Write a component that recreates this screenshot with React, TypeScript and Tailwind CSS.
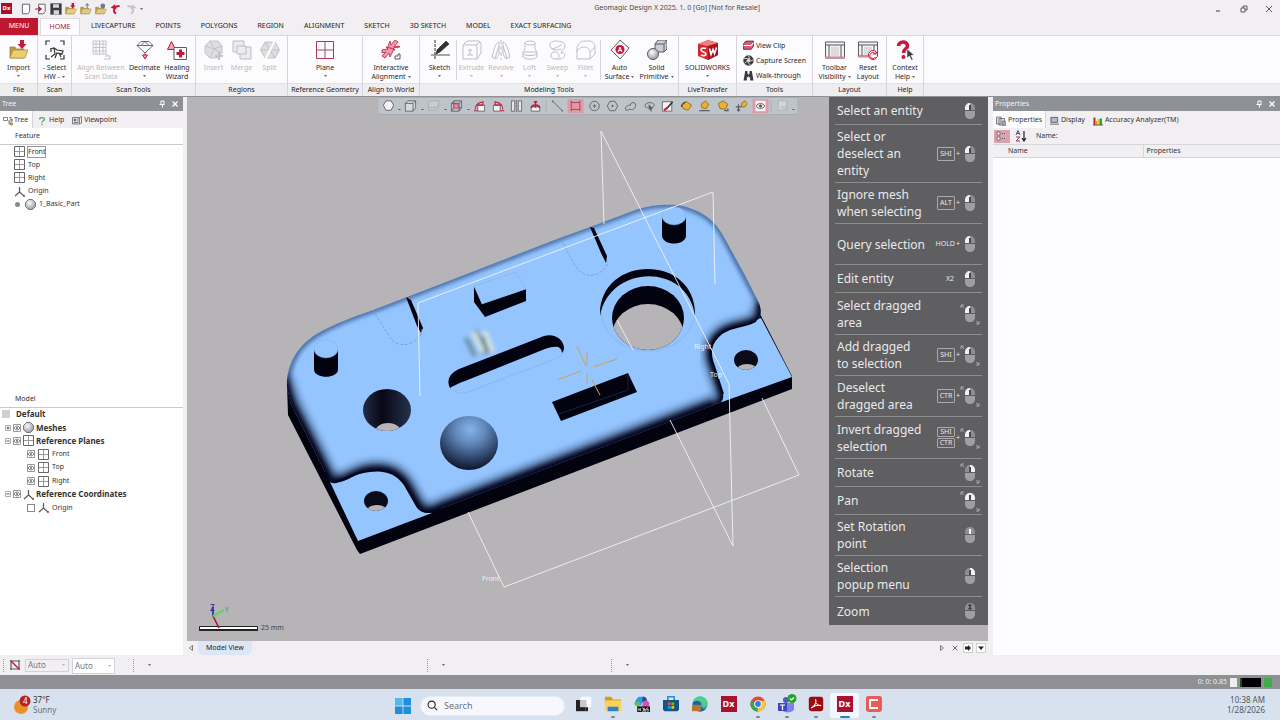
import type { ReactNode } from 'react'

const RED = '#c8173c'
const INK = '#5b5b60'

function Svg({ box = '0 0 20 20', className = 'h-5 w-5', children }: { box?: string; className?: string; children: ReactNode }) {
  return (
    <svg viewBox={box} className={`shrink-0 ${className}`} fill="none" stroke={INK} strokeWidth="1" aria-hidden="true">
      {children}
    </svg>
  )
}

/* ---------- ribbon icons ---------- */

const FolderShape = ({ color = '#e8cf70' }: { color?: string }) => (
  <>
    <path d="M1 18V7h5l1 2h8v9z" fill="#b89a45" stroke="#8f7632" strokeWidth=".7" />
    <path d="M1 18l3-8h15l-3 8z" fill={color} stroke="#a58b3c" strokeWidth=".7" />
  </>
)

const ribbonIcons: Record<string, ReactNode> = {
  import: (
    <>
      <FolderShape />
      <path d="M11 0h4v4h2.500L13 9 8.500 4H11z" fill={RED} stroke="none" />
    </>
  ),
  select: (
    <>
      <path d="M1 5V1h4M15 1h4v4M19 15v4h-4M5 19H1v-4" strokeWidth="1.200" stroke="#333" />
      <path d="M5 9l4-1 3 2 6 1-1 3-5-1-2 5M9 8l1 6-4 3M14 13l2 4M6 9v3" strokeWidth="1.200" stroke="#333" />
    </>
  ),
  alignScan: (
    <g stroke="#c4c4c8">
      <path d="M2 1h13v13H2zM5 1v13M8.500 1v13M12 1v13M2 4h13M2 7.500h13M2 11h13" />
      <path d="M14 16h5v3h-6M16 14v2" strokeWidth="1.200" />
    </g>
  ),
  decimate: (
    <>
      <path d="M6 1.500h8l4 4-8 7.500-8-7.500zM2 5.500h16M6 5.500l4-4 4 4" strokeWidth=".9" />
      <path d="M10 13v2" />
      <path d="M7.500 15h5L10 19z" fill="#f0a5b5" stroke={RED} />
    </>
  ),
  healing: (
    <>
      <path d="M4.500 1.500l4 8h-8z" fill="#f0a5b5" stroke={RED} />
      <path d="M7 7.500h12.500v12H7z" fill="#fff" />
      <path d="M12 9.500h3v2.500h2.500v3H15v2.500h-3V15H9.500v-3H12z" fill={RED} stroke="none" />
    </>
  ),
  insert: (
    <g stroke="#c4c4c8" fill="#dededf">
      <path d="M6 1h8l4 5v7l-5 5H6l-5-5V6z" />
      <path d="M6 1l4 8 8-3M1 6l9 3-4 9M10 9l8 4" />
      <path d="M15 12v8M11 16h8" strokeWidth="2" />
    </g>
  ),
  merge: (
    <g stroke="#bdbdc1" fill="#ececee">
      <path d="M1 1h11v11H1z" />
      <path d="M8 7h11v12H8z" />
      <path d="M5 6h9v8H5z" />
    </g>
  ),
  split: (
    <g stroke="#c4c4c8" fill="#dededf">
      <path d="M5 2h10l4.500 8-4.500 8H5L.5 10zM.5 10h19M5 2l10 16" />
      <path d="M15 0L5 20" stroke="#fff" strokeWidth="2" />
    </g>
  ),
  plane: (
    <>
      <path d="M1.500 1.500h17v17h-17z" stroke="#b3324d" />
      <path d="M10 1v18M1 10h18" stroke="#8c5260" />
    </>
  ),
  interactive: (
    <>
      <path d="M18 6l-5 1 4-5-3-2-4 5-1-4-3 8 8 1-2-2 7-1z" fill="#ef9aab" stroke={RED} strokeWidth=".8" />
      <path d="M1 10l6-1-2-2 8 2-4 8-1-4-4 5-3-2 4-4-4 1z" fill="#ef9aab" stroke={RED} strokeWidth=".8" />
      <path d="M14 19v-3h3v-2h2v5z" />
    </>
  ),
  sketch: (
    <>
      <path d="M5 0v20" stroke="#333" strokeDasharray="3 1" />
      <path d="M1 15h19" stroke="#555" />
      <path d="M16 1l3 3-9 8-4 2 1-4z" fill="#333" stroke="#222" strokeWidth=".6" />
    </>
  ),
  extrude: (
    <g stroke="#bfbfc3">
      <path d="M1 5l4-4h12l2 2v10l-4 6H1zM1 5h13l1 2v12M14 5l4-3" />
      <path d="M8 15V9M6 11l2-2 2 2M5 15h6" />
    </g>
  ),
  revolve: (
    <g stroke="#bfbfc3">
      <path d="M10 0v20" strokeDasharray="4 2" />
      <path d="M8 2C4 3 3 10 1 17l4 2 3-5zM12 2c4 1 5 8 7 15l-4 2-3-5zM8 6L4 18M12 6l4 12" />
    </g>
  ),
  loft: (
    <g stroke="#bfbfc3">
      <ellipse cx="10" cy="3" rx="5" ry="2" />
      <path d="M5 3c0 5 0 7-2 9h14c-2-2-2-4-2-9M3 12v5c3 3 11 3 14 0v-5M3 14c3 2 11 2 14 0" />
    </g>
  ),
  sweep: (
    <g stroke="#bfbfc3">
      <path d="M3 8C0 4 3 1 8 1c6 0 9 2 9 5s-4 4-4 7c5-1 5 6-1 6H7c-6 0-5-8 0-7" />
      <path d="M3 8c3 2 7-2 11-3M3 8c3 3 7 2 10 1M9 19c3-1 3-6-2-7" />
    </g>
  ),
  fillet: (
    <g stroke="#bfbfc3">
      <path d="M1 7c2-4 4-6 8-6h5c4 1 5 3 5 7v6l-5 5V13c0-4-3-6-6-6S1 9 1 12zM1 12v7h13M14 12l5-5" />
    </g>
  ),
  autoSurface: (
    <>
      <path d="M10 0c3 3 6 5 9 8-3 4-6 8-9 11C7 16 4 13 1 10c3-3 6-6 9-10z" fill="#f4f4f5" />
      <circle cx="10" cy="9.500" r="4.500" fill={RED} stroke="none" />
      <path d="M8 12l2-5 2 5M8.800 10.500h2.400" stroke="#fff" />
    </>
  ),
  solid: (
    <>
      <path d="M8 4l3-4h9v9l-3 3H8z" fill="#c9cdd6" />
      <path d="M8 4h9v8M17 4l3-4" />
      <circle cx="6" cy="14" r="5.500" fill="url(#ballGrad)" />
    </>
  ),
  solidworks: (
    <>
      <path d="M0 4l10-4 10 3v12l-10 5-10-4z" fill="#d9242b" stroke="none" />
      <path d="M0 4l10-4 10 3-10 3z" fill="#f08080" stroke="none" />
      <path d="M10 6l10-3v12l-10 5z" fill="#a8131c" stroke="none" />
      <path d="M8 8.500c-3-1-5-.500-5 1.500s5 2 5 4-3 2-5 1M11.500 8.500l1.500 6 2-5 1.500 4 2-6" stroke="#fff" strokeWidth="1.600" />
    </>
  ),
  toolbarVis: (
    <>
      <path d="M.5 2h19v16H.5z" fill="#f2f2f3" />
      <path d="M.5 5h19M4 5v13M16 5v13" />
      <path d="M6 7h8v9H6z" fill="#dcdcde" stroke="none" />
      <path d="M0 17.500h20" stroke="#d98797" strokeWidth="2" />
    </>
  ),
  reset: (
    <>
      <path d="M.5 2h19v14H.5z" fill="#f2f2f3" />
      <path d="M.5 5h19M4 5v11M16 5v11" />
      <path d="M6 7h8v8H6z" fill="#dcdcde" stroke="none" />
      <path d="M0 16.500h12" stroke="#d98797" strokeWidth="2" />
      <circle cx="15" cy="15" r="4.500" fill="#fff" stroke={RED} />
      <path d="M17.500 14a3 3 0 1 0 0 3M15 14h3v-2" stroke={RED} />
    </>
  ),
  help: (
    <>
      <path d="M3.500 6c0-5 9-5.500 9 0 0 3-4 3-4 7" stroke={RED} strokeWidth="3.600" />
      <circle cx="8.500" cy="17" r="2" fill={RED} stroke="none" />
      <path d="M12 9l7 6-3 .5 2 4-1.500 1-2-4.500-2.500 2z" fill="#3b3b40" stroke="#fff" strokeWidth=".5" />
    </>
  ),
}

type Tool = { id: string; lines: string[]; width: string; arrow?: 'below' | 'inline'; disabled?: boolean; split?: boolean }

const groups: { label: string; width: string; tools: Tool[] }[] = [
  { label: 'File', width: 'w-[38px]', tools: [{ id: 'import', lines: ['Import'], width: 'w-[36px]', arrow: 'below' }] },
  { label: 'Scan', width: 'w-[34px]', tools: [{ id: 'select', lines: ['- Select', 'HW -'], width: 'w-[32px]', arrow: 'inline' }] },
  {
    label: 'Scan Tools',
    width: 'w-[124px]',
    tools: [
      { id: 'alignScan', lines: ['Align Between', 'Scan Data'], width: 'w-[54px]', disabled: true },
      { id: 'decimate', lines: ['Decimate'], width: 'w-[33px]', arrow: 'below' },
      { id: 'healing', lines: ['Healing', 'Wizard'], width: 'w-[32px]' },
    ],
  },
  {
    label: 'Regions',
    width: 'w-[92px]',
    tools: [
      { id: 'insert', lines: ['Insert'], width: 'w-[28px]', disabled: true },
      { id: 'merge', lines: ['Merge'], width: 'w-[28px]', disabled: true },
      { id: 'split', lines: ['Split'], width: 'w-[28px]', disabled: true },
    ],
  },
  { label: 'Reference Geometry', width: 'w-[75px]', tools: [{ id: 'plane', lines: ['Plane'], width: 'w-[40px]', arrow: 'below' }] },
  { label: 'Align to World', width: 'w-[57px]', tools: [{ id: 'interactive', lines: ['Interactive', 'Alignment'], width: 'w-[50px]', arrow: 'inline' }] },
  {
    label: 'Modeling Tools',
    width: 'w-[259px]',
    tools: [
      { id: 'sketch', lines: ['Sketch'], width: 'w-[32px]', arrow: 'below' },
      { id: 'extrude', lines: ['Extrude'], width: 'w-[30px]', arrow: 'below', disabled: true, split: true },
      { id: 'revolve', lines: ['Revolve'], width: 'w-[29px]', arrow: 'below', disabled: true },
      { id: 'loft', lines: ['Loft'], width: 'w-[28px]', arrow: 'below', disabled: true },
      { id: 'sweep', lines: ['Sweep'], width: 'w-[28px]', arrow: 'below', disabled: true },
      { id: 'fillet', lines: ['Fillet'], width: 'w-[28px]', arrow: 'below', disabled: true },
      { id: 'autoSurface', lines: ['Auto', 'Surface'], width: 'w-[38px]', arrow: 'inline', split: true },
      { id: 'solid', lines: ['Solid', 'Primitive'], width: 'w-[36px]', arrow: 'inline' },
    ],
  },
  { label: 'LiveTransfer', width: 'w-[58px]', tools: [{ id: 'solidworks', lines: ['SOLIDWORKS'], width: 'w-[54px]', arrow: 'below' }] },
  { label: 'Tools', width: 'w-[76px]', tools: [] },
  {
    label: 'Layout',
    width: 'w-[74px]',
    tools: [
      { id: 'toolbarVis', lines: ['Toolbar', 'Visibility'], width: 'w-[37px]', arrow: 'inline' },
      { id: 'reset', lines: ['Reset', 'Layout'], width: 'w-[30px]' },
    ],
  },
  { label: 'Help', width: 'w-[37px]', tools: [{ id: 'help', lines: ['Context', 'Help'], width: 'w-[34px]', arrow: 'inline' }] },
]

const Caret = ({ faded }: { faded?: boolean }) => (
  <svg viewBox="0 0 3 2" className="h-[2px] w-[3px] shrink-0" aria-hidden="true">
    <path d="M0 0h3L1.500 2z" fill={faded ? '#b5b5b9' : '#66666b'} />
  </svg>
)

function RibbonTool({ tool }: { tool: Tool }) {
  return (
    <>
      {tool.split && <span className="mt-1 h-10 w-px shrink-0 bg-[#d6d6da]" />}
      <button
        disabled={tool.disabled}
        className={`${tool.width} flex shrink-0 flex-col items-center pt-1 leading-[9px] whitespace-nowrap ${tool.disabled ? 'text-[#b9b9bd]' : 'text-[#2b2b2e]'}`}
      >
        <Svg>{ribbonIcons[tool.id]}</Svg>
        <span className="mt-[3px]">{tool.lines[0]}</span>
        {tool.lines[1] && (
          <span className="flex items-center gap-[2px]">
            {tool.lines[1]}
            {tool.arrow === 'inline' && <Caret />}
          </span>
        )}
        {tool.arrow === 'below' && (
          <span className="mt-[3px] block">
            <Caret faded={tool.disabled} />
          </span>
        )}
      </button>
    </>
  )
}

function QuickTools() {
  return (
    <div className="flex flex-col items-start pt-[2px] leading-[15px] text-[#2b2b2e]">
      <button className="flex items-center gap-[2px] whitespace-nowrap">
        <Svg className="h-[11px] w-[11px]">
          <path d="M1 7l4-5h14v9l-4 6H1z" fill="#d65b75" stroke="#333" strokeWidth="1.500" />
          <path d="M1 10h14l4-5" stroke="#fff" strokeWidth="2" />
        </Svg>
        View Clip
      </button>
      <button className="flex items-center gap-[2px] whitespace-nowrap">
        <Svg className="h-[11px] w-[11px]">
          <circle cx="10" cy="10" r="9" fill="#3b3b3f" />
          <circle cx="10" cy="10" r="3" fill="#eee" />
          <path d="M10 1l3 8M19 9l-8 3M13 18l-5-6M3 15l6-6M2 6l9 1" stroke="#eee" strokeWidth="1.500" />
        </Svg>
        Capture Screen
      </button>
      <button className="flex items-center gap-[2px] whitespace-nowrap">
        <Svg className="h-[11px] w-[11px]">
          <path d="M4 2h4v5h4V2h4l3 17h-6v-6H7v6H1z" fill="#3b3b3f" stroke="none" />
          <path d="M10 1v18" stroke="#fff" strokeDasharray="3 2" />
        </Svg>
        Walk-through
      </button>
    </div>
  )
}

function TitleBar() {
  return (
    <header className="grid h-[17px] grid-cols-[8fr_auto_7fr] items-center bg-[#f1eff2]">
      <div className="flex items-center">
        <span className="ml-[1px] mr-2 flex h-[11px] w-[11px] items-center justify-center bg-[#a80f2c] text-[6px] font-bold text-white">Dx</span>
        <div className="flex items-center gap-[3px]">
          <button aria-label="New">
            <Svg className="h-3 w-3"><path d="M4 2h12v12l-3 4H4z" fill="#fff" strokeWidth="1.500" /></Svg>
          </button>
          <button aria-label="Open">
            <Svg className="h-3 w-3">
              <path d="M6 2h11v12l-3 4H6z" fill="#fff" strokeWidth="1.500" />
              <path d="M0 9h6V5l6 5-6 5v-4H0z" fill={RED} stroke="none" />
            </Svg>
          </button>
          <button aria-label="Save">
            <Svg className="h-3 w-3">
              <path d="M1 1h18v18H1z" fill="#3a3a3f" />
              <path d="M5 2h10v6H5zM6 12h9v7H6z" fill="#d5d5d8" stroke="none" />
            </Svg>
          </button>
          <button aria-label="Import file">
            <Svg className="h-3 w-3">{ribbonIcons.import}</Svg>
          </button>
          <button aria-label="Export file">
            <Svg className="h-3 w-3">
              <FolderShape color="#dccb85" />
              <path d="M11 9V4H8l4-4 4 4h-3v5z" fill="#8a8a8e" stroke="none" />
            </Svg>
          </button>
          <button aria-label="Open recent">
            <Svg className="h-3 w-3">
              <FolderShape color="#dccb85" />
              <circle cx="13" cy="5" r="4" fill="#77777c" stroke="none" />
            </Svg>
          </button>
          <button aria-label="Undo">
            <Svg className="h-3 w-3"><path d="M10 18C3 13 7 5 16 5" stroke={RED} strokeWidth="3" /><path d="M1 8l7-6 3 9z" fill={RED} stroke="none" /></Svg>
          </button>
          <button aria-label="Redo">
            <Svg className="h-3 w-3"><path d="M10 18C17 13 13 5 4 5" stroke="#c6c6ca" strokeWidth="3" /><path d="M19 8l-7-6-3 9z" fill="#c6c6ca" stroke="none" /></Svg>
          </button>
          <Caret />
        </div>
      </div>
      <h1 className="text-[#4b4b50]">Geomagic Design X 2025. 1. 0 [Go] [Not for Resale]</h1>
      <div className="flex justify-end gap-[17px] pr-[7px] text-[#333]">
        <button aria-label="Minimize"><Svg box="0 0 8 8" className="h-2 w-2"><path d="M1 6h4" strokeWidth="1.200" /></Svg></button>
        <button aria-label="Restore"><Svg box="0 0 8 8" className="h-2 w-2"><path d="M1 3h4v4H1zM3 3V1h4v4H5" /></Svg></button>
        <button aria-label="Close"><Svg box="0 0 8 8" className="h-2 w-2"><path d="M1 1l6 6M7 1L1 7" /></Svg></button>
      </div>
    </header>
  )
}

const ribbonTabs = ['LIVECAPTURE', 'POINTS', 'POLYGONS', 'REGION', 'ALIGNMENT', 'SKETCH', '3D SKETCH', 'MODEL', 'EXACT SURFACING']

function Ribbon() {
  return (
    <div className="bg-[#f1eff2] text-[#222226]">
      <nav className="flex h-[18px] items-end">
        <button className="mr-[2px] h-[17px] w-[38px] bg-[#bd1731] text-white">MENU</button>
        <button className="mr-[1px] h-[17px] w-[40px] border border-b-0 border-[#dcdce0] bg-[#fcfbfd] text-[#a8263f]">HOME</button>
        {ribbonTabs.map((tab) => (
          <button key={tab} className="h-[17px] px-[10px] whitespace-nowrap">{tab}</button>
        ))}
      </nav>
      <div className="flex h-[61px] border-t border-[#dcdce0] bg-[#fcfbfd]">
        {groups.map((group) => (
          <section key={group.label} className={`${group.width} flex shrink-0 flex-col border-r border-[#d6d6da]`}>
            <div className="flex h-[47px] justify-center">
              {group.tools.length ? group.tools.map((tool) => <RibbonTool key={tool.id} tool={tool} />) : <QuickTools />}
            </div>
            <h2 className="flex h-[13px] items-center justify-center border-t border-[#e2e2e6] bg-[#eeedf0] leading-[10px] whitespace-nowrap">{group.label}</h2>
          </section>
        ))}
        <div className="flex flex-1 flex-col justify-end">
          <div className="h-[13px] border-t border-[#e2e2e6] bg-[#eeedf0]" />
        </div>
      </div>
    </div>
  )
}

/* ---------- dock panels ---------- */

function DockHeader({ title }: { title: string }) {
  return (
    <div className="flex h-[14px] items-center justify-between bg-[#8f9196] pl-[2px] pr-1 text-[#f3f3f4]">
      <h2>{title}</h2>
      <div className="flex gap-[5px]">
        <button aria-label={`Pin ${title}`}><Svg box="0 0 8 8" className="h-2 w-2"><path d="M3 1h3v3.500H3zM1.500 4.500h5M4.500 5v2.500" stroke="#fff" /></Svg></button>
        <button aria-label={`Close ${title}`}><Svg box="0 0 8 8" className="h-2 w-2"><path d="M1.500 1.500l5 5M6.500 1.500l-5 5" stroke="#fff" strokeWidth="1.300" /></Svg></button>
      </div>
    </div>
  )
}

const PlaneIcon = () => (
  <Svg box="0 0 11 11" className="h-[11px] w-[11px]"><path d="M.5.5h10v10H.5z" stroke="#66666b" /><path d="M5.500 1v9M1 5.500h9" stroke="#9a9a9e" /></Svg>
)
const AxesIcon = () => (
  <Svg box="0 0 11 11" className="h-[11px] w-[11px]"><path d="M5.500 1v5" stroke="#4d6b4a" strokeWidth="1.300" /><path d="M5.500 6L1 10M5.500 6L10 10" strokeWidth="1.200" /><circle cx="10" cy="10" r="1" fill="#b33" stroke="none" /></Svg>
)
const MeshIcon = () => (
  <Svg box="0 0 11 11" className="h-[11px] w-[11px]"><path d="M3.500.5h4l3 3v4l-3 3h-4l-3-3v-4z" fill="url(#ballGrad)" stroke="#77777c" /></Svg>
)
const EyeIcon = () => (
  <Svg box="0 0 8 8" className="h-2 w-2"><path d="M.5.5h7v7h-7z" stroke="#99999d" /><path d="M1 4c1.500-2.500 4.500-2.500 6 0-1.500 2.500-4.500 2.500-6 0z" strokeWidth=".8" /><circle cx="4" cy="4" r=".9" fill={INK} stroke="none" /></Svg>
)
const Expander = ({ open }: { open: boolean }) => (
  <button aria-label={open ? 'Collapse' : 'Expand'}>
    <Svg box="0 0 6 6" className="h-[6px] w-[6px]"><path d="M.5.5h5v5h-5z" stroke="#99999d" strokeWidth=".8" /><path d={open ? 'M1.500 3h3' : 'M1.500 3h3M3 1.500v3'} /></Svg>
  </button>
)

function TreePanel() {
  return (
    <aside className="flex w-[183px] shrink-0 flex-col bg-white text-[#333337]">
      <DockHeader title="Tree" />
      <div className="flex h-[17px] items-stretch bg-[#f1eff2]">
        <button className="flex w-[33px] items-center gap-[1px] border-r border-[#d6d6da] bg-white pt-[2px] pl-[3px]">
          <Svg className="h-[10px] w-[10px]"><path d="M1 3h8v6H1zM12 3h4v5h3M12 8v8M12 12h7M12 16h7" strokeWidth="1.500" /><path d="M15 6h4v3h-4zM15 14h4v4h-4z" fill="#cfae3c" stroke="#84702a" /></Svg>
          Tree
        </button>
        <button className="flex items-center gap-[3px] pt-[2px] pl-[5px]">
          <Svg className="h-[10px] w-2"><path d="M4 6c0-6 12-6 12 0 0 4-6 3-6 8" stroke="#5a9b6a" strokeWidth="3" /><circle cx="10" cy="18" r="2" fill="#5a9b6a" stroke="none" /></Svg>
          Help
        </button>
        <button className="flex items-center gap-[2px] pt-[2px] pl-2">
          <Svg className="h-[10px] w-[10px]"><path d="M1 3h14v13H1z" fill="#dedee1" strokeWidth="1.500" /><path d="M15 3l4-2v13l-4 2" strokeWidth="1.500" /><circle cx="6" cy="8" r="2" fill={INK} /><path d="M10 6h3M10 10h3M4 13h8" strokeWidth="1.500" /></Svg>
          Viewpoint
        </button>
      </div>
      <section className="min-h-[263px] flex-1">
        <h3 className="flex h-[17px] items-center border-b border-[#c9c9cc] pl-[15px]">Feature</h3>
        <ul className="grid h-[66px] auto-rows-fr">
          {['Front', 'Top', 'Right'].map((name) => (
            <li key={name} className="flex items-center gap-[2px] pl-[14px]">
              <PlaneIcon />
              <span className={`border leading-[10px] ${name === 'Front' ? 'border-[#99999d] text-[#2b2b2e]' : 'border-transparent'}`}>{name}</span>
            </li>
          ))}
          <li className="flex items-center gap-[3px] pl-[14px]"><AxesIcon />Origin</li>
          <li className="flex items-center gap-[3px] pl-[15px]">
            <span className="mr-[2px] h-[5px] w-[5px] rounded-full bg-[#88888c]" />
            <MeshIcon />
            1_Basic_Part
          </li>
        </ul>
      </section>
      <section className="min-h-[263px] flex-1">
        <h3 className="flex h-4 items-center border-b border-[#c9c9cc] pl-[15px]">Model</h3>
        <ul className="grid h-[107px] auto-rows-fr">
          <li className="flex items-center gap-[6px] pl-[2px] text-[8px] leading-3 font-bold"><span className="h-2 w-2 bg-[#cfcfd2]" />Default</li>
          <li className="flex items-center gap-[2px] pl-[5px] text-[8px] leading-3 font-bold"><Expander open={false} /><EyeIcon /><MeshIcon />Meshes</li>
          <li className="flex items-center gap-[2px] pl-[5px] text-[8px] leading-3 font-bold"><Expander open /><EyeIcon /><PlaneIcon />Reference Planes</li>
          {['Front', 'Top', 'Right'].map((name) => (
            <li key={name} className="flex items-center gap-[3px] pl-[27px]"><EyeIcon /><PlaneIcon />{name}</li>
          ))}
          <li className="flex items-center gap-[2px] pl-[5px] text-[8px] leading-3 font-bold"><Expander open /><EyeIcon /><AxesIcon />Reference Coordinates</li>
          <li className="flex items-center pl-[27px]">
            <label className="flex items-center gap-[3px]">
              <input type="checkbox" className="h-2 w-2 appearance-none border border-[#88888c] bg-white" />
              <AxesIcon />
              Origin
            </label>
          </li>
        </ul>
      </section>
    </aside>
  )
}

function PropertiesPanel() {
  return (
    <aside className="flex w-[288px] shrink-0 flex-col border-l border-[#f1eff2] bg-[#fdfcfe] text-[#333337]">
      <DockHeader title="Properties" />
      <div className="flex h-[17px] items-stretch bg-[#f1eff2]">
        <button className="flex w-[53px] items-center gap-[2px] border-r border-[#d6d6da] bg-[#fdfcfe] pt-[2px] pl-[3px]">
          <Svg className="h-[10px] w-[10px]"><path d="M1 2h9v14H1zM6 5h11v13H6z" fill="#d8dce8" strokeWidth="1.500" /><path d="M13 10h6v9h-6z" fill="#9aa3b8" /></Svg>
          Properties
        </button>
        <button className="flex items-center gap-[2px] pt-[2px] pl-1">
          <Svg className="h-[10px] w-[9px]"><path d="M2 2h15v11H2z" fill="#aebccb" strokeWidth="2" /><path d="M0 17h20" strokeWidth="2" /></Svg>
          Display
        </button>
        <button className="flex items-center gap-[2px] pt-[2px] pl-2">
          <Svg className="h-[10px] w-[10px]"><g stroke="none"><path d="M1 3h4v15H1z" fill="#c22" /><path d="M5 10h4v8H5z" fill="#e89b20" /><path d="M9 6h4v12H9z" fill="#e8d020" /><path d="M13 5h5v13h-5z" fill="#3a9b3a" /></g><path d="M0 18h20" strokeWidth="2" /></Svg>
          Accuracy Analyzer(TM)
        </button>
      </div>
      <div className="flex h-4 items-center bg-[#f1eff2]">
        <button aria-label="Categorized" className="mx-[1px] flex h-[13px] w-4 items-center justify-center bg-[#dba3b0]">
          <Svg box="0 0 12 10" className="h-[10px] w-3"><path d="M1 1h3v3H1zM1 6h3v3H1z" fill="#fff" strokeWidth=".8" /><path d="M6 2.500h4M6 7.500h4" strokeDasharray="1 1" /></Svg>
        </button>
        <button aria-label="Sort by name" className="mx-1">
          <Svg box="0 0 12 12" className="h-3 w-3"><path d="M1 5l2-4.500L5 5M2 3.500h2" stroke="#3a4ba0" /><path d="M1 7h4l-4 4h4" stroke="#a03a4b" /><path d="M9 1v9M7 8l2 3 2-3" stroke="#222" strokeWidth="1.200" /></Svg>
        </button>
        <span className="pl-[5px]">Name:</span>
      </div>
      <table className="w-full table-fixed text-left">
        <thead className="bg-[#f1eff2]">
          <tr className="h-[13px] border-y border-[#d6d6da]">
            <th className="w-[150px] p-0 pl-[15px] font-normal">Name</th>
            <th className="border-l border-[#d6d6da] p-0 pl-[3px] font-normal">Properties</th>
          </tr>
        </thead>
      </table>
    </aside>
  )
}

/* ---------- viewport ---------- */

const topFace =
  'M287 387C286 362 300 343 320 332C335 324 352 317 373 310L407 297L557 239L590 227L638 209C650 205 665 204 679 205C700 210 714 218 724 237L746 277L759 303C762 312 761 318 756 321C746 327 733 325 722 333C709 343 709 354 714 366L723 394C724 400 721 403 716 404L442 508C430 514 422 515 417 506L405 485C397 473 385 469 370 471C354 473 345 484 334 482C329 481 328 477 325 472L291 404Z'
const frontEdge = 'M282 378L291 405L325 472C328 480 331 483 336 482C345 484 354 473 370 471C385 469 397 473 405 485L417 506C422 515 430 514 442 508L716 404'
const cornerEdge = 'M716 404C723 402 724 400 723 394L714 366C709 354 709 343 722 333C733 325 746 327 756 321C761 318 762 312 759 303'

function PartModel() {
  return (
    <svg viewBox="187 97 801 544" className="h-full w-full" aria-label="Part model" role="img">
      <defs>
        <radialGradient id="ballGrad" cx=".4" cy=".35" r=".7">
          <stop offset="0" stopColor="#fdfdfd" />
          <stop offset="1" stopColor="#92959b" />
        </radialGradient>
        <radialGradient id="domeGrad" cx=".52" cy=".25" r=".78">
          <stop offset="0" stopColor="#84b3ea" />
          <stop offset=".35" stopColor="#5f86b8" />
          <stop offset=".7" stopColor="#2e4468" />
          <stop offset="1" stopColor="#0a0e22" />
        </radialGradient>
        <linearGradient id="holeGrad" x1="0" x2="1">
          <stop offset="0" stopColor="#232c46" />
          <stop offset=".4" stopColor="#070714" />
          <stop offset="1" stopColor="#26334d" />
        </linearGradient>
        <filter id="soft" x="-20%" y="-20%" width="140%" height="140%"><feGaussianBlur stdDeviation="4" /></filter>
        <filter id="softer" x="-20%" y="-20%" width="140%" height="140%"><feGaussianBlur stdDeviation="2" /></filter>
        <clipPath id="faceClip"><path d={topFace} /></clipPath>
        <clipPath id="boreClip"><ellipse cx="648" cy="318" rx="36" ry="32" /></clipPath>
        <clipPath id="holeClip"><ellipse cx="387" cy="410" rx="24" ry="21" /></clipPath>
        <clipPath id="leftHoleClip"><ellipse cx="376" cy="501" rx="12" ry="10" /></clipPath>
        <clipPath id="rightHoleClip"><ellipse cx="746" cy="360" rx="12" ry="10" /></clipPath>
      </defs>

      {/* body sides and the two lower ledges */}
      <path d="M287 385L288 415L357 550L360 554L792 389V376L759 312L600 380L340 470Z" fill="#03030f" />
      <path d="M330 482L358 541L432 513L415 480L370 460Z" fill="#95c5ff" />
      <path d="M700 340L761 318L792 377L722 402L700 400Z" fill="#95c5ff" />

      <path d={topFace} fill="#95c5ff" />
      <g clipPath="url(#faceClip)" fill="none">
        <path d="M287 392C286 362 300 343 320 332C335 324 352 317 373 310L407 297L557 239L638 209C650 205 665 204 679 205C700 210 714 218 724 237L759 303" stroke="#4a6da0" strokeWidth="6" filter="url(#softer)" />
        <path d={frontEdge} stroke="#16223f" strokeWidth="15" filter="url(#soft)" />
        <path d={frontEdge} stroke="#04061a" strokeWidth="6" filter="url(#softer)" />
        <path d={cornerEdge} stroke="#16223f" strokeWidth="12" filter="url(#soft)" />
        <path d={cornerEdge} stroke="#04061a" strokeWidth="5" filter="url(#softer)" />
      </g>
      <path d="M325 472C328 481 331 483 336 482C345 480 354 472 370 471C385 469 397 473 405 485L417 506C422 514 430 513 442 509" fill="none" stroke="#04061a" strokeWidth="2" />
      <path d="M723 394L714 366C709 354 709 343 722 333C733 325 746 327 756 321" fill="none" stroke="#04061a" strokeWidth="2" />

      {/* slots on the back edge */}
      <path d="M406 297L411 300L423 328L421 333L417 326Z" fill="#03030f" />
      <path d="M590 227L594 228L607 256L606 263L601 253Z" fill="#03030f" />
      <path d="M373 310L389 336C394 345 404 347 413 342C420 338 423 333 421 329M561 239L574 264C580 275 590 278 599 273C605 270 608 265 607 260" fill="none" stroke="#6d93c4" strokeWidth=".7" strokeDasharray="3 1.500" />

      {/* pins */}
      <path d="M314 350V370C315 379 337 379 338 370V350Z" fill="#03030f" />
      <ellipse cx="326" cy="349" rx="12" ry="9" fill="#95c5ff" stroke="#7ea6d8" strokeWidth=".4" />
      <path d="M662 217V236C663 246 685 246 686 236V217Z" fill="#03030f" />
      <ellipse cx="674" cy="216" rx="12" ry="9" fill="#95c5ff" stroke="#7ea6d8" strokeWidth=".4" />

      {/* raised block */}
      <path d="M474 286L482 304L526 289V301L485 317L474 302Z" fill="#03030f" />
      <path d="M474 286L516 272L526 289L482 304Z" fill="#95c5ff" stroke="#7ea6d8" strokeWidth=".4" />

      {/* stepped bore */}
      <ellipse cx="648" cy="311" rx="47" ry="40" fill="none" stroke="#7ea6d8" strokeWidth=".5" />
      <path d="M600 316C598 254 697 253 695 316C688 262 609 264 600 316Z" fill="#03030f" />
      <ellipse cx="648" cy="318" rx="36" ry="32" fill="#03030f" />
      <ellipse cx="648" cy="336" rx="36" ry="32" fill="#b6b4b7" clipPath="url(#boreClip)" />

      {/* long slot */}
      <path d="M450 388C446 380 450 373 459 369L544 336C555 333 565 340 564 350L562 353C561 345 555 346 545 349L465 381C457 384 453 386 450 388Z" fill="#03030f" />
      <path d="M451 388C457 394 462 394 468 392L552 360C560 357 564 354 564 349" fill="none" stroke="#7ea6d8" strokeWidth=".5" />

      {/* pocket */}
      <path d="M552 402L628 373L637 392L561 421Z" fill="#03030f" />
      <path d="M559 414L628 390V375" fill="none" stroke="#25385f" strokeWidth=".6" />

      {/* holes */}
      <ellipse cx="387" cy="410" rx="24" ry="21" fill="url(#holeGrad)" />
      <ellipse cx="388" cy="434" rx="14" ry="11" fill="#b6b4b7" clipPath="url(#holeClip)" />
      <ellipse cx="376" cy="501" rx="12" ry="10" fill="#0a0a18" />
      <ellipse cx="377" cy="512" rx="11" ry="7" fill="#b6b4b7" clipPath="url(#leftHoleClip)" />
      <ellipse cx="746" cy="360" rx="12" ry="10" fill="#0a0a18" />
      <ellipse cx="747" cy="371" rx="11" ry="7" fill="#b6b4b7" clipPath="url(#rightHoleClip)" />

      {/* dome */}
      <ellipse cx="469" cy="443" rx="29" ry="27" fill="url(#domeGrad)" />

      {/* pointer trail */}
      <g filter="url(#softer)" fill="none">
        <path d="M466 338l9 18M475 330l9 24" stroke="#6f8fa5" strokeWidth="5" />
        <path d="M473 332l10 20M484 331l9 21" stroke="#d8e4df" strokeWidth="5" />
        <path d="M482 336l6 17" stroke="#44636b" strokeWidth="3" />
      </g>

      {/* reference planes */}
      <g fill="none" stroke="#f2f2f4" strokeWidth="1" strokeOpacity=".9">
        <path d="M604 224L601 131L729 384L733 546L670 420" />
        <path d="M420 396L418 303L713 192L715 284" />
        <path d="M468 512L504 587L799 475L762 398M617 320L633 350" />
      </g>
      <path d="M577 346l9 20M587 352v13M587 374v10M617 359l-24 8M557 380l24-9M592 380l8 15" stroke="#c9a254" strokeWidth="1" />
      <g fill="#eef1f6" fontSize="7">
        <text x="694" y="349">Right</text>
        <text x="710" y="377">Top</text>
        <text x="482" y="581">Front</text>
      </g>

      {/* axis triad and scale */}
      <path d="M199.500 626.500h58v4h-58z" fill="#fff" stroke="#222" strokeWidth="1" />
      <path d="M199 629h59v2h-59z" fill="#222" />
      <path d="M213 616L219 628" stroke="#a8152a" strokeWidth="1.500" />
      <path d="M213 616V607" stroke="#1c1c9c" strokeWidth="1.500" />
      <path d="M213 616L224 610" stroke="#62d268" strokeWidth="2.500" />
      <text x="210" y="611" fontSize="8" fill="#1c1c9c">Z</text>
      <text x="225" y="612" fontSize="7" fill="#4e9a55">Y</text>
      <text x="261" y="630" fontSize="7" fill="#44444a">25 mm</text>
    </svg>
  )
}

const viewTools: { name: string; art?: ReactNode; on?: boolean; kind?: 'caret' | 'sep' }[] = [
  { name: 'Shading', art: <path d="M4 1h6l3 5-3 6H4L1 6z" fill="#f2f2f3" /> },
  { name: 'c1', kind: 'caret' },
  { name: 'View cube', art: <path d="M1 4l3-3h9v8l-3 4H1zM1 4h9v9M10 4l3-3" fill="#d7dade" /> },
  { name: 'c2', kind: 'caret' },
  { name: 'Ghost', art: <path d="M1 4l3-3h9v8l-3 3H1zM1 9h9l3-3" fill="#c9cdd1" stroke="#a6aaae" /> },
  { name: 'c3', kind: 'caret' },
  { name: 'Viewpoint box', art: <><path d="M1 4l3-3h9v8l-3 4H1zM1 4h9v9M10 4l3-3M4 1v8h9M4 9l-3 4" /><path d="M4 4.500h5v5H4z" fill="#dc8fa0" stroke={RED} strokeWidth=".6" /></> },
  { name: 'c4', kind: 'caret' },
  { name: 'Rotate left', art: <><path d="M5 6h8v7H5z" fill="#f2f2f3" /><path d="M0 12.500h5M2 11c0-5 3-8 9-9V6H5" stroke={RED} strokeWidth="1.300" /></> },
  { name: 'Rotate right', art: <><path d="M1 6h8v7H1z" fill="#f2f2f3" /><path d="M14 12.500H9M12 11c0-5-3-8-9-9v4h6" stroke={RED} strokeWidth="1.300" /></> },
  { name: 'Flip', art: <><path d="M1 1h4v12H1zM9 1h4v12H9z" fill="#e4e6e9" /><path d="M7 0v14" strokeDasharray="2 1" /></> },
  { name: 'Look at', art: <><path d="M2 8h10v5H2z" fill="#f2f2f3" /><path d="M7 2v7M2 9c1-4 9-4 10 0M5 2h4" stroke={RED} strokeWidth="1.800" /></> },
  { name: 's1', kind: 'sep' },
  { name: 'Line selection', art: <path d="M2 2l10 10M1 1h1v1H1zM12 12h1v1h-1z" /> },
  { name: 'Rectangle selection', on: true, art: <path d="M2 3h10v8H2zM1 2h2M11 2h2M1 12h2M11 12h2" stroke="#a33b50" /> },
  { name: 'Circle selection', art: <><circle cx="7" cy="7" r="5.500" /><path d="M5 7h4M7 5v4" /></> },
  { name: 'Polygon selection', art: <><path d="M4 1.500h6l3 5.500-3 5.500H4L1 7z" /><path d="M5.500 7h3M7 5.500v3" /></> },
  { name: 'Freehand selection', art: <path d="M2 12c-3-4 2-6 5-6 0-4 6-4 6 0s-3 6-6 5-3 2-5 1z" /> },
  { name: 'Lasso selection', art: <><path d="M5 9C0 9 1 3 7 3s7 4 3 6" /><path d="M6 5l5 5-2 .5 1 2.500-1.500.500-1-3L6 12z" fill={INK} stroke="none" /></> },
  { name: 'Paint brush selection', art: <><path d="M1 2h11v11H1z" fill="#f2f2f3" /><path d="M13 2L7 9" stroke="#333" strokeWidth="2" /><path d="M7 9l-4 3" stroke={RED} strokeWidth="2.500" /></> },
  { name: 'Flood fill selection', art: <><path d="M1 8c0-3 2-4 5-6" stroke="#333" strokeWidth="1.500" /><path d="M2 6l5-4 6 4-4 6-6-2z" fill="#eab030" stroke="#8a6c22" /></> },
  { name: 'Extend to similar', art: <><path d="M3 5l5-4 4 4-3 5-5-1z" fill="#eab030" stroke="#8a6c22" /><path d="M1 12.500h12" strokeWidth="1.500" /></> },
  { name: 'Select through', art: <><path d="M1 4l6-3 5 4-3 6-6-1z" fill="#eab030" stroke="#8a6c22" /><path d="M8 12.500h5M12 10v3" strokeWidth="1.500" /></> },
  { name: 'Resize selection', art: <><path d="M7 4l4-3 3 3-3 4-4 0z" fill="#eab030" stroke="#8a6c22" /><path d="M0 8h7M3.500 5v8M2 11l1.500 2L5 11" strokeWidth="1.300" /></> },
  { name: 'Visible only', on: true, art: <><path d="M1 1h12v12H1z" fill="#f6eef0" stroke="none" /><path d="M2 7c2-4 8-4 10 0-2 4-8 4-10 0z" /><circle cx="7" cy="7" r="1.500" fill={INK} /></> },
  { name: 's2', kind: 'sep' },
  { name: 'Hide', art: <path d="M2 1h10v11H2zM5 9c1-2 6-2 8 0-2 2-6 2-8 0z" fill="#d2d5d8" stroke="#b0b3b7" /> },
  { name: 'c5', kind: 'caret' },
]

function ViewToolbar() {
  return (
    <div className="absolute top-0 left-1/2 flex h-[18px] w-[421px] -translate-x-1/2 items-center justify-between border border-[#a9adb2] bg-[#bdc4ca] px-[2px]">
      {viewTools.map((tool) => {
        if (tool.kind === 'caret') return <span key={tool.name} className="mt-[6px] h-px w-[2px] bg-[#55555a]" />
        if (tool.kind === 'sep') return <span key={tool.name} className="h-3 w-px bg-[#a9adb2]" />
        return (
          <button key={tool.name} aria-label={tool.name} className={`flex h-[14px] w-4 items-center justify-center ${tool.on ? 'bg-[#e09aa5]' : ''}`}>
            <Svg box="0 0 14 14" className="h-3 w-3">{tool.art}</Svg>
          </button>
        )
      })}
    </div>
  )
}

type Hotkey = { lines: string[]; keys?: string[]; plain?: string; press: 'left' | 'right' | 'both' | 'wheel' | 'scroll'; drag?: boolean; height?: string }

const hotkeys: Hotkey[] = [
  { lines: ['Select an entity'], press: 'left', height: 'h-7' },
  { lines: ['Select or', 'deselect an', 'entity'], keys: ['SHI'], press: 'left', height: 'h-[58px]' },
  { lines: ['Ignore mesh', 'when selecting'], keys: ['ALT'], press: 'left' },
  { lines: ['Query selection'], plain: 'HOLD', press: 'left' },
  { lines: ['Edit entity'], plain: 'X2', press: 'left', height: 'h-7' },
  { lines: ['Select dragged', 'area'], press: 'left', drag: true, height: 'h-[42px]' },
  { lines: ['Add dragged', 'to selection'], keys: ['SHI'], press: 'left', drag: true },
  { lines: ['Deselect', 'dragged area'], keys: ['CTR'], press: 'left', drag: true },
  { lines: ['Invert dragged', 'selection'], keys: ['SHI', 'CTR'], press: 'left', drag: true, height: 'h-[42px]' },
  { lines: ['Rotate'], press: 'right', drag: true, height: 'h-7' },
  { lines: ['Pan'], press: 'both', drag: true, height: 'h-7' },
  { lines: ['Set Rotation', 'point'], press: 'wheel' },
  { lines: ['Selection', 'popup menu'], press: 'right' },
  { lines: ['Zoom'], press: 'scroll', height: 'h-7' },
]

function MouseIcon({ press, drag }: { press: Hotkey['press']; drag?: boolean }) {
  const left = press === 'left' || press === 'both'
  const right = press === 'right' || press === 'both'
  return (
    <Svg box="0 0 20 22" className="h-[22px] w-5">
      <g stroke="none">
        <path d="M5 10V8c0-3 2-5 5-5v7z" fill={left ? '#f2f2f2' : '#8f8e91'} />
        <path d="M15 10V8c0-3-2-5-5-5v7z" fill={right ? '#f2f2f2' : '#8f8e91'} />
        <path d="M5 11h10v3c0 3-2 5-5 5s-5-2-5-5z" fill="#9f9ea1" />
      </g>
      <path d="M10 5v5" stroke={press === 'wheel' ? '#fff' : '#4a494c'} strokeWidth="2" />
      {press === 'scroll' && <path d="M8 6l2-2 2 2M8 8l2 2 2-2" stroke="#4a494c" />}
      {drag && <path d="M1 5V2h3M1 2l3 3M19 18v3h-3M19 21l-3-3" stroke="#bbbabd" strokeWidth=".8" />}
    </Svg>
  )
}

function HotkeyPanel() {
  return (
    <aside className="absolute top-0 right-0 w-[159px] bg-[#5f5e61] px-[6px] text-[#e9e9ea]">
      <ul className="divide-y divide-[#8d8c8f]">
        {hotkeys.map((row) => (
          <li key={row.lines[0]} className={`${row.height ?? 'h-[41px]'} flex items-center justify-between pl-[2px]`}>
            <span className="text-[12px] leading-[17px] whitespace-nowrap">
              {row.lines.map((line) => <span key={line} className="block">{line}</span>)}
            </span>
            <span className="flex items-center pr-[2px] leading-2">
              {row.keys && (
                <span className="flex flex-col gap-[1px]">
                  {row.keys.map((key) => (
                    <kbd key={key} className={`w-[18px] rounded-[1px] border border-[#aaa9ac] text-center font-[inherit] ${row.keys?.length === 1 ? 'py-[2px]' : ''}`}>{key}</kbd>
                  ))}
                </span>
              )}
              {row.plain && <span className={row.plain === 'X2' ? 'pr-[6px]' : ''}>{row.plain}</span>}
              {(row.keys || row.plain === 'HOLD') && <span className="pl-[1px]">+</span>}
              <MouseIcon press={row.press} drag={row.drag} />
            </span>
          </li>
        ))}
      </ul>
    </aside>
  )
}

function Viewport() {
  return (
    <main className="flex min-w-0 flex-1 flex-col">
      <div className="relative min-h-[544px] flex-1 bg-[#b6b4b7]">
        <div className="absolute inset-0"><PartModel /></div>
        <ViewToolbar />
        <HotkeyPanel />
      </div>
      <div className="flex h-[14px] items-center bg-[#f1eff2] text-[#222]">
        <button aria-label="Previous view" className="ml-[2px] mr-[5px]"><Svg box="0 0 4 6" className="h-[6px] w-1"><path d="M3.500.5v5L.5 3z" strokeWidth=".8" /></Svg></button>
        <button className="h-[14px] rounded-b-md bg-[#dbe7f9] px-2">Model View</button>
        <div className="ml-auto flex items-center gap-[3px] pr-[2px]">
          <button aria-label="Next view"><Svg box="0 0 4 6" className="h-[6px] w-1"><path d="M.5.5v5L3.500 3z" strokeWidth=".8" /></Svg></button>
          <button aria-label="Close view" className="pl-[5px] pr-[2px]"><Svg box="0 0 8 8" className="h-[6px] w-[6px]"><path d="M1 1l6 6M7 1L1 7" strokeWidth="1.200" /></Svg></button>
          <button aria-label="Pin view" className="border border-[#cfcfd2] bg-white"><Svg box="0 0 8 8" className="h-2 w-2"><path d="M1 2.500h3V1l3 3-3 3V5.500H1z" fill="#222" stroke="none" /></Svg></button>
          <button aria-label="List views" className="border border-[#cfcfd2] bg-white"><Svg box="0 0 8 8" className="h-2 w-2"><path d="M1 2.500h6L4 6z" fill="#222" stroke="none" /></Svg></button>
        </div>
      </div>
    </main>
  )
}

/* ---------- bottom bars ---------- */

const Grip = () => <span className="h-[13px] w-0 border-l border-dotted border-[#9a9a9e]" />

function FilterBar() {
  return (
    <div className="flex h-5 items-center bg-[#f1eff2] text-[8px] text-[#77777c]">
      <div className="flex w-[123px] items-center pl-[3px]">
        <Grip />
        <button aria-label="Selection filter" className="ml-[5px] mr-1">
          <Svg box="0 0 12 12" className="h-3 w-3"><path d="M2 1v10M10 1v10M1 2h10M1 10h10" strokeWidth="1.200" /><path d="M2 2l8 8" stroke={RED} strokeWidth="1.500" /></Svg>
        </button>
        <span className="relative mr-[3px] flex items-center">
          <select aria-label="Selection mode" className="h-[13px] w-[44px] appearance-none border border-[#d3d3d7] bg-[#f1eff2] pl-[2px] leading-[10px]"><option>Auto</option></select>
          <span className="absolute right-1"><Caret faded /></span>
        </span>
        <span className="relative mt-[2px] flex items-center">
          <select aria-label="Filter mode" className="h-4 w-[43px] appearance-none border border-[#d3d3d7] bg-white pl-[2px] leading-[10px]"><option>Auto</option></select>
          <span className="absolute right-1"><Caret faded /></span>
        </span>
      </div>
      <div className="flex w-[304px] items-center gap-[14px] pl-[10px]"><Grip /><Caret /></div>
      <div className="flex w-[184px] items-center gap-[14px]"><Grip /><Caret /></div>
      <div className="flex items-center gap-[14px]"><Grip /><Caret /></div>
    </div>
  )
}

const DxTile = () => <span className="flex h-4 w-4 items-center justify-center bg-[#ab1030] text-[9px] font-bold text-white">Dx</span>

const apps: { name: string; art: ReactNode; running?: boolean; active?: boolean }[] = [
  { name: 'Task View', art: <Svg className="h-4 w-4"><g stroke="none"><path d="M6 1h13v13H6z" fill="#fafafa" /><path d="M0 5h12v14H0z" fill="#222226" /><path d="M12 14h3v5h-3z" fill="#222226" /><path d="M5 5h8v9H5z" fill="#c8c8cb" /></g></Svg> },
  { name: 'File Explorer', running: true, art: <Svg className="h-[18px] w-[18px]"><g stroke="none"><path d="M1 2h7l2 3h9v5H1z" fill="#d99a1c" /><path d="M1 6h18v12H1z" fill="#fbd35a" /><path d="M4 13h12v5H4z" fill="#2d84c8" /></g></Svg> },
  { name: 'Microsoft 365', art: <Svg className="h-4 w-4"><g stroke="none"><path d="M7 1h6L9 12H4c-4 0-4-3-2-6s3-5 5-5z" fill="#2f9be0" /><path d="M11 1c4 0 5 2 5 5l-6 2z" fill="#2446a8" /><path d="M12 6h5c3 2 3 6 0 9l-7-2z" fill="#d951b0" /><path d="M2 7c2 1 5 1 6 0l-2 7c-3 0-5-3-4-7z" fill="#63c25a" /><path d="M4 13h16v7H4z" fill="#111" /></g><path d="M6 15v4M8 15v4M6 17h2M10 15h2v4h-2M13 15v4h2v-2h-2M18 15h-2v2h2v2h-2" stroke="#fff" strokeWidth=".8" /></Svg> },
  { name: 'Microsoft Store', art: <Svg className="h-4 w-4"><path d="M6 5V1h8v4" stroke="#2b8fd0" strokeWidth="2" /><g stroke="none"><path d="M0 5h20v12l-2 2H2l-2-2z" fill="#155384" /><path d="M6 8h3.500v3.500H6z" fill="#f25022" /><path d="M10.500 8H14v3.500h-3.500z" fill="#7fba00" /><path d="M6 12.500h3.500V16H6z" fill="#00a4ef" /><path d="M10.500 12.500H14V16h-3.500z" fill="#ffb900" /></g></Svg> },
  { name: 'Edge', art: <Svg className="h-4 w-4"><g stroke="none"><circle cx="10" cy="10" r="9.500" fill="#2e9fd6" /><path d="M1 8C3-2 19-2 19.500 9c0 5-6 5-8 4 3-5-4-8-10.500-5z" fill="#4fcf86" /><path d="M1 9c4-6 13-2 10 4 2 4 6 3 7 2-4 7-16 6-17-6z" fill="#1b5fb0" /><path d="M0 11h11v8H0z" fill="#b8782c" /></g></Svg> },
  { name: 'Geomagic Design X', art: <DxTile /> },
  { name: 'Chrome', running: true, art: <Svg className="h-4 w-4"><g stroke="none"><circle cx="10" cy="10" r="9.500" fill="#e0483b" /><path d="M10 10L1.800 5.200A9.500 9.500 0 0 0 9.500 19.500z" fill="#35a352" /><path d="M10 10l-.5 9.500A9.500 9.500 0 0 0 18.500 6H10z" fill="#f7c633" /><circle cx="10" cy="10" r="4.800" fill="#fff" /><circle cx="10" cy="10" r="3.600" fill="#3b78e7" /></g></Svg> },
  { name: 'Teams', running: true, art: <Svg className="h-5 w-5"><g stroke="none"><circle cx="9" cy="6" r="3" fill="#5059c9" /><path d="M5 9h12v6c0 4-12 5-12 0z" fill="#7b83eb" /><path d="M1 9h9v8H1z" fill="#4048b5" /><circle cx="15" cy="4.500" r="4.500" fill="#23a323" /></g><path d="M13 4.500l1.500 1.500L17 3.500M3 11h5M5.500 11v5" stroke="#fff" strokeWidth="1.200" /></Svg> },
  { name: 'Acrobat', running: true, art: <Svg className="h-4 w-4"><rect x="1" y="1" width="18" height="18" rx="3" fill="#9c0b10" stroke="none" /><path d="M4 15c4-2 7-7 5.500-11 0 5 3 8 7 8-4-1-9 0-12.500 3z" stroke="#fff" strokeWidth="1.400" /></Svg> },
  { name: 'Design X session', running: true, active: true, art: <DxTile /> },
  { name: 'Camtasia', running: true, art: <Svg className="h-4 w-4"><rect x="0" y="0" width="20" height="20" rx="3" fill="#ec5a55" stroke="none" /><path d="M15 5H5v10h10" stroke="#fff" strokeWidth="2.500" /></Svg> },
]

function Taskbar() {
  return (
    <footer className="grid h-[31px] grid-cols-[1fr_auto_1fr] items-center bg-[#d7e2ee]">
      <div className="flex items-center gap-[2px] pl-[13px] text-[8px] leading-[10px] text-[#333]">
        <Svg box="0 0 18 20" className="h-5 w-[18px]">
          <circle cx="8" cy="12" r="7" fill="#ee9028" stroke="none" />
          <circle cx="12" cy="6" r="5.500" fill="#b3232b" stroke="none" />
          <text x="10" y="9" fontSize="8" fill="#fff" stroke="none">4</text>
        </Svg>
        <div>
          <p>37°F</p>
          <p className="text-[#66727e]">Sunny</p>
        </div>
      </div>
      <div className="flex items-center pt-[2px] pl-[3px]">
        <button aria-label="Start" className="mr-[9px]">
          <Svg className="h-4 w-4"><g stroke="none" fill="#1f8fdc"><path d="M0 0h9.500v9.500H0z" fill="#4fb9f0" /><path d="M10.500 0H20v9.500h-9.500zM0 10.500h9.500V20H0zM10.500 10.500H20V20h-9.500z" /></g></Svg>
        </button>
        <label className="flex h-5 w-[145px] items-center gap-[6px] rounded-full border border-[#e6ecf5] bg-[#f6f8fd] pl-[6px]">
          <Svg className="h-[11px] w-[11px]"><circle cx="8.500" cy="8.500" r="6.500" stroke="#222" strokeWidth="2" /><path d="M13.500 13.500l5 5" stroke="#222" strokeWidth="2" /></Svg>
          <input aria-label="Search" placeholder="Search" className="w-24 bg-transparent text-[9px] outline-none placeholder:text-[#6b6f76]" />
        </label>
        <div className="ml-1 flex">
          {apps.map((app) => (
            <button key={app.name} aria-label={app.name} className={`flex h-[25px] w-[29px] flex-col items-center justify-end gap-[2px] ${app.active ? 'rounded-[2px] bg-[#f3f6fb]' : ''}`}>
              <span className="flex h-5 items-center">{app.art}</span>
              <span className={`h-[2px] rounded-full ${app.active ? 'w-[10px] bg-[#2382c8]' : 'w-[4px]'} ${app.running && !app.active ? 'bg-[#7d858e]' : ''}`} />
            </button>
          ))}
        </div>
      </div>
      <div className="pr-[15px] text-right text-[8px] leading-[10px] text-[#4f5963]">
        <p>10:38 AM</p>
        <p>1/28/2026</p>
      </div>
    </footer>
  )
}

export default function App() {
  return (
    <div className="flex min-h-screen flex-col bg-[#f1eff2] font-['Noto_Sans','Open_Sans',sans-serif] text-[7px]">
      <TitleBar />
      <Ribbon />
      <div className="flex flex-1 gap-1 border-t border-[#8f9196]">
        <TreePanel />
        <Viewport />
        <PropertiesPanel />
      </div>
      <FilterBar />
      <div className="flex h-[14px] items-center justify-end gap-[3px] bg-[#8f9095] pr-2 text-[#eeeef0]">
        <span>0: 0: 0.85</span>
        <span className="h-[9px] w-[7px] bg-[#eeeef0]" />
        <span className="h-[9px] w-[21px] border-l-2 border-[#1d4d1d] bg-black" />
        <span className="h-[9px] w-2 bg-[#3dae45]" />
      </div>
      <Taskbar />
    </div>
  )
}
